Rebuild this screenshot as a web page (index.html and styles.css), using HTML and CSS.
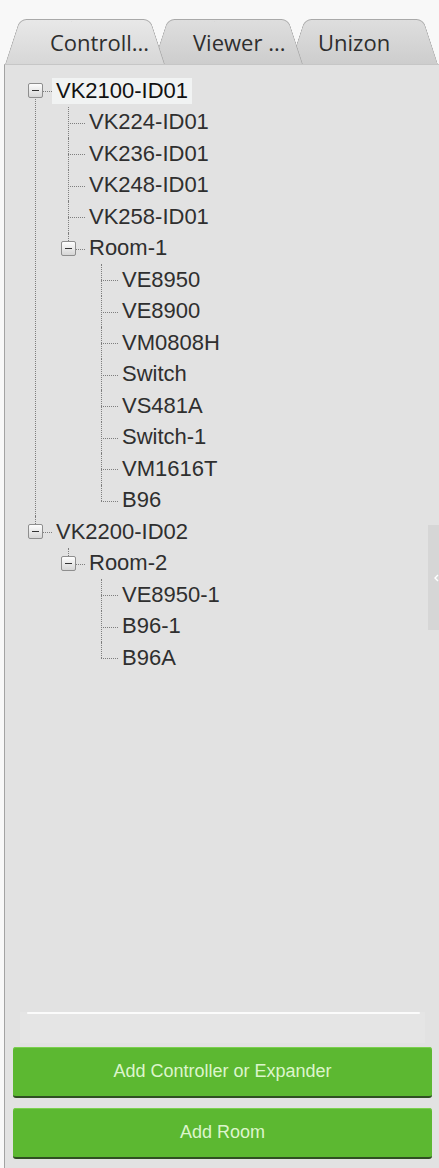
FILE: index.html
```html
<!DOCTYPE html>
<html>
<head>
    <meta charset="UTF-8">
    <meta name="viewport" content="width=device-width, initial-scale=1.0">
    <title>Controllers</title>
    <link rel="stylesheet" href="styles.css">
</head>
<body>
    <div class="tabs">
        <div class="tab tab-controllers active">Controll...</div>
        <div class="tab tab-viewer">Viewer ...</div>
        <div class="tab tab-unizon">Unizon</div>
    </div>

    <div class="panel">
        <ul class="tree">
            <li>
                <div class="row"><span class="slot"><span class="toggle"></span></span><span class="label selected">VK2100-ID01</span></div>
                <ul>
                    <li><div class="row"><span class="slot"></span><span class="label">VK224-ID01</span></div></li>
                    <li><div class="row"><span class="slot"></span><span class="label">VK236-ID01</span></div></li>
                    <li><div class="row"><span class="slot"></span><span class="label">VK248-ID01</span></div></li>
                    <li><div class="row"><span class="slot"></span><span class="label">VK258-ID01</span></div></li>
                    <li>
                        <div class="row"><span class="slot"><span class="toggle"></span></span><span class="label">Room-1</span></div>
                        <ul>
                            <li><div class="row"><span class="slot"></span><span class="label">VE8950</span></div></li>
                            <li><div class="row"><span class="slot"></span><span class="label">VE8900</span></div></li>
                            <li><div class="row"><span class="slot"></span><span class="label">VM0808H</span></div></li>
                            <li><div class="row"><span class="slot"></span><span class="label">Switch</span></div></li>
                            <li><div class="row"><span class="slot"></span><span class="label">VS481A</span></div></li>
                            <li><div class="row"><span class="slot"></span><span class="label">Switch-1</span></div></li>
                            <li><div class="row"><span class="slot"></span><span class="label">VM1616T</span></div></li>
                            <li><div class="row"><span class="slot"></span><span class="label">B96</span></div></li>
                        </ul>
                    </li>
                </ul>
            </li>
            <li>
                <div class="row"><span class="slot"><span class="toggle"></span></span><span class="label">VK2200-ID02</span></div>
                <ul>
                    <li>
                        <div class="row"><span class="slot"><span class="toggle"></span></span><span class="label">Room-2</span></div>
                        <ul>
                            <li><div class="row"><span class="slot"></span><span class="label">VE8950-1</span></div></li>
                            <li><div class="row"><span class="slot"></span><span class="label">B96-1</span></div></li>
                            <li><div class="row"><span class="slot"></span><span class="label">B96A</span></div></li>
                        </ul>
                    </li>
                </ul>
            </li>
        </ul>

        <!-- collapse handle on the splitter -->
        <div class="splitter-handle">
            <svg width="5" height="8" viewBox="0 0 5 8"><path d="M4 1 L1 4 L4 7" fill="none" stroke="#fff" stroke-width="1.4"/></svg>
        </div>

        <div class="footer">
            <div class="scrollbar"><div class="thumb"></div></div>
            <button class="btn">Add Controller or Expander</button>
            <button class="btn">Add Room</button>
        </div>
    </div>
</body>
</html>
```

FILE: styles.css
```css
body, html {
    margin: 0;
    padding: 0;
    width: 100%;
    height: 100%;
    overflow: hidden;
}

body {
    display: flex;
    flex-direction: column;
    background: #f8f8f8;
    font-family: 'Liberation Sans', Arial, sans-serif;
}

/* ---- tab strip ---- */
.tabs {
    display: flex;
    height: 45px;
    margin-top: 19px;
    padding-left: 5px;
}

.tab {
    position: relative;
    height: 45px;
    display: flex;
    align-items: center;
    font-family: 'Open Sans', sans-serif;
    font-size: 22px;
    color: #2e2e2e;
    box-sizing: border-box;
    white-space: nowrap;
}

/* trapezoid drawn from two skewed halves */
.tab::before,
.tab::after {
    content: '';
    position: absolute;
    top: 0;
    bottom: 0;
    background: linear-gradient(#dedede, #cdcdcd);
    border-top: 1px solid #a9a9a9;
    z-index: -1;
}

.tab::before {
    left: 0;
    right: calc(50% - 1px);
    border-left: 1px solid #a9a9a9;
    border-top-left-radius: 7px;
    transform: skewX(-18deg);
    transform-origin: bottom left;
}

.tab::after {
    left: 50%;
    right: 0;
    border-right: 1px solid #a9a9a9;
    border-top-right-radius: 7px;
    transform: skewX(18deg);
    transform-origin: bottom right;
}

.tab.active::before,
.tab.active::after {
    background: linear-gradient(#e8e8e8, #d7d7d7);
}

.tab-controllers {
    width: 160px;
    padding-left: 45px;
    z-index: 3;
}

.tab-viewer {
    width: 150px;
    margin-left: -12px;
    padding-left: 40px;
    z-index: 2;
}

.tab-unizon {
    width: 147px;
    margin-left: -13px;
    padding-left: 28px;
    z-index: 1;
}

/* ---- panel ---- */
.panel {
    position: relative;
    flex: 1;
    display: flex;
    flex-direction: column;
    margin-left: 4px;
    background: #e2e2e2;
    border-left: 1px solid #a3a3a3;
    border-top: 1px solid #c6c6c6;
}

/* ---- tree view ---- */
.tree, .tree ul {
    list-style: none;
    margin: 0;
    padding: 0;
}

.tree {
    flex: 1;
    padding: 10px 0 0 13px;
}

.tree ul {
    padding-left: 33px;
}

.tree li {
    position: relative;
}

/* vertical connector */
.tree li::before {
    content: '';
    position: absolute;
    left: 17px;
    top: 0;
    bottom: 0;
    border-left: 1px dotted #7e7e7e;
}

.tree li:last-child::before {
    bottom: auto;
    height: 16px;
}

.tree > li:first-child::before {
    top: 16px;
    height: auto;
    bottom: 0;
}

/* horizontal connector */
.tree li::after {
    content: '';
    position: absolute;
    left: 17px;
    top: 16px;
    width: 17px;
    border-top: 1px dotted #7e7e7e;
}

.row {
    display: flex;
    align-items: center;
    height: 31.5px;
}

.slot {
    position: relative;
    z-index: 1;
    width: 34px;
    height: 100%;
    flex-shrink: 0;
    display: flex;
    align-items: center;
    padding-left: 10px;
    box-sizing: border-box;
}

.toggle {
    width: 15px;
    height: 15px;
    box-sizing: border-box;
    border: 1px solid #8e8e8e;
    border-radius: 2px;
    background: linear-gradient(#fdfdfd, #d6d6d6);
    display: flex;
    align-items: center;
    justify-content: center;
}

.toggle::before {
    content: '';
    width: 7px;
    height: 1px;
    background: #333;
}

.label {
    font-size: 22px;
    line-height: 26px;
    padding: 0 4px;
    color: #2f2f2f;
    white-space: nowrap;
}

.label.selected {
    color: #111;
    background: #f1f3f3;
}

/* ---- splitter handle ---- */
.splitter-handle {
    position: absolute;
    right: 0;
    top: 460px;
    width: 11px;
    height: 105px;
    background: #d6d6d6;
    display: flex;
    align-items: center;
    justify-content: flex-end;
}

/* ---- footer ---- */
.footer {
    display: flex;
    flex-direction: column;
    padding: 0 7px 9px 8px;
}

.scrollbar {
    height: 31px;
    margin: 0 7px 4px 7px;
    padding: 0 5px 0 7px;
    background: #e5e5e5;
}

.thumb {
    height: 2px;
    border-radius: 1px;
    background: #fbfbfb;
}

.btn {
    height: 51px;
    margin: 0;
    border: none;
    border-radius: 3px;
    border-bottom: 2px solid #2f4f22;
    background: #5cb831;
    box-shadow: inset 0 1px 0 #7ad04d;
    color: #dcf5cc;
    font-family: 'Liberation Sans', Arial, sans-serif;
    font-size: 18px;
    text-align: center;
    padding: 0;
}

.btn + .btn {
    margin-top: 10px;
}
```
